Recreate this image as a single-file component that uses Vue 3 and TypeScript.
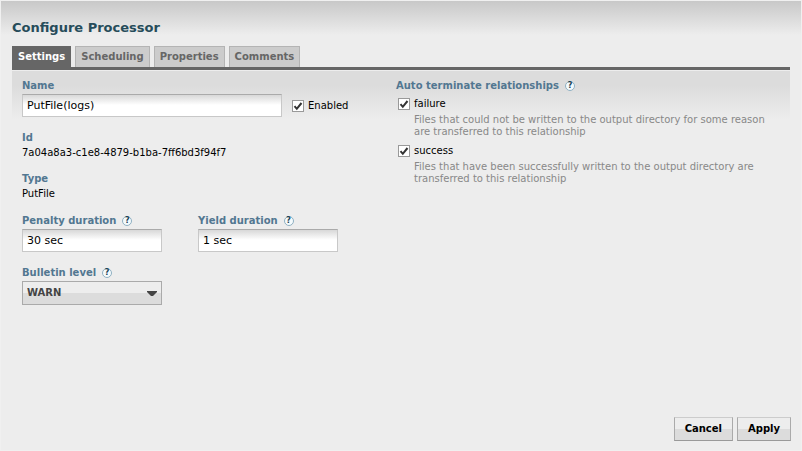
<script setup lang="ts">
import { reactive, ref } from 'vue'

interface Relationship {
  name: string
  description: string
  terminate: boolean
}

const tabs: string[] = ['Settings', 'Scheduling', 'Properties', 'Comments']
const activeTab = ref<string>('Settings')

const processor = reactive({
  name: 'PutFile(logs)',
  enabled: true,
  id: '7a04a8a3-c1e8-4879-b1ba-7ff6bd3f94f7',
  type: 'PutFile',
  penalty: '30 sec',
  yield: '1 sec',
  bulletin: 'WARN',
})

const levels: string[] = ['DEBUG', 'INFO', 'WARN', 'ERROR']

const relationships = reactive<Relationship[]>([
  {
    name: 'failure',
    description:
      'Files that could not be written to the output directory for some reason are transferred to this relationship',
    terminate: true,
  },
  {
    name: 'success',
    description:
      'Files that have been successfully written to the output directory are transferred to this relationship',
    terminate: true,
  },
])
</script>

<template>
  <main class="dialog">
    <h1 class="title">Configure Processor</h1>
    <nav class="tabs">
      <button
        v-for="tab in tabs"
        :key="tab"
        type="button"
        class="tab"
        :class="{ active: tab === activeTab }"
        @click="activeTab = tab"
      >{{ tab }}</button>
    </nav>
    <form class="panel" @submit.prevent>
      <div class="column">
        <div class="name-row">
          <div class="field name-field">
            <label class="label" for="name">Name</label>
            <input id="name" v-model="processor.name" class="text" type="text" />
          </div>
          <label class="check enabled">
            <input v-model="processor.enabled" type="checkbox" class="box" />
            <span>Enabled</span>
          </label>
        </div>
        <div class="field">
          <span class="label">Id</span>
          <span class="value">{{ processor.id }}</span>
        </div>
        <div class="field">
          <span class="label">Type</span>
          <span class="value">{{ processor.type }}</span>
        </div>
        <div class="pair">
          <div class="field short">
            <div class="heading">
              <label class="label" for="penalty">Penalty duration</label>
              <span class="help">?</span>
            </div>
            <input id="penalty" v-model="processor.penalty" class="text" type="text" />
          </div>
          <div class="field short">
            <div class="heading">
              <label class="label" for="yield">Yield duration</label>
              <span class="help">?</span>
            </div>
            <input id="yield" v-model="processor.yield" class="text" type="text" />
          </div>
        </div>
        <div class="field short">
          <div class="heading">
            <label class="label" for="bulletin">Bulletin level</label>
            <span class="help">?</span>
          </div>
          <div class="select-wrap">
            <select id="bulletin" v-model="processor.bulletin" class="select">
              <option v-for="level in levels" :key="level">{{ level }}</option>
            </select>
            <svg class="arrow" width="10" height="5" viewBox="0 0 10 5" aria-hidden="true">
              <path d="M0 0h10v1L6 5H4L0 1z" fill="#444" />
            </svg>
          </div>
        </div>
      </div>
      <div class="column">
        <div class="heading">
          <span class="label">Auto terminate relationships</span>
          <span class="help">?</span>
        </div>
        <div class="relationships">
          <div v-for="item in relationships" :key="item.name" class="relationship">
            <label class="check">
              <input v-model="item.terminate" type="checkbox" class="box" />
              <span>{{ item.name }}</span>
            </label>
            <p class="description">{{ item.description }}</p>
          </div>
        </div>
      </div>
    </form>
    <footer class="actions">
      <button type="button" class="button">Cancel</button>
      <button type="button" class="button">Apply</button>
    </footer>
  </main>
</template>

<style>
body {
  background: #ededed;
}
</style>

<style scoped>
.dialog,
.dialog * {
  box-sizing: border-box;
}
.dialog {
  display: flex;
  flex-direction: column;
  min-height: 100vh;
  padding: 19px 11px 9px;
  border: 1px solid #f0f0f0;
  background: linear-gradient(#c8c8c8, #ededed 34px) no-repeat #ededed;
  color: #000;
  font: 10px/14px Verdana, 'DejaVu Sans', sans-serif;
}
.title {
  margin: 0 0 10px;
  color: #264c5a;
  font-size: 13px;
  line-height: 16px;
}
.tabs {
  display: flex;
  gap: 4px;
  border-bottom: 3px solid #666;
}
.tab {
  height: 21px;
  padding: 0 5px;
  border: 1px solid #b4b4b4;
  border-bottom: 0;
  background: #ccc;
  color: #666;
  font: bold 10px/20px Verdana, 'DejaVu Sans', sans-serif;
}
.tab.active {
  border-color: #666;
  background: #666;
  color: #fff;
}
.panel {
  display: grid;
  grid-template-columns: 374px minmax(0, 1fr);
  flex: 1;
  margin-top: 1px;
  padding: 8px 10px 0;
  background: linear-gradient(#dcdcdc, #dcdcdc 14px, #ededed 48px);
}
.column {
  display: flex;
  flex-direction: column;
}
.field + .field {
  margin-top: 13px;
}
.name-row + .field,
.pair,
.pair + .field {
  margin-top: 14px;
}
.pair .field + .field {
  margin-top: 0;
}
.name-row {
  display: flex;
  align-items: flex-end;
  gap: 10px;
}
.name-field {
  width: 260px;
}
.pair {
  display: flex;
  gap: 36px;
}
.field {
  display: flex;
  flex-direction: column;
}
.short {
  width: 140px;
}
.heading {
  display: flex;
  align-items: center;
  gap: 6px;
}
.label {
  color: #527791;
  font-weight: bold;
}
.value {
  margin-top: 2px;
  line-height: 12px;
}
.help {
  width: 10px;
  height: 10px;
  border: 1px solid #8fb0c2;
  border-radius: 5px;
  background: #f4fafc;
  color: #1c4354;
  font-size: 8px;
  font-weight: bold;
  line-height: 8px;
  text-align: center;
}
.text {
  width: 100%;
  height: 23px;
  margin-top: 1px;
  padding: 0 4px;
  border: 1px solid #c8c8c8;
  border-top-color: #aaa;
  border-radius: 0;
  background: linear-gradient(#d8d8d8, #fff 10px);
  color: #000;
  font: 11px/20px Verdana, 'DejaVu Sans', sans-serif;
}
.check {
  display: flex;
  align-items: center;
  gap: 4px;
}
.enabled {
  height: 23px;
}
.box {
  appearance: none;
  flex: none;
  width: 12px;
  height: 12px;
  margin: 0;
  border: 1px solid #999;
  background: #fff;
}
.box:checked {
  background: #fff
    url("data:image/svg+xml,%3Csvg xmlns='http://www.w3.org/2000/svg' viewBox='0 0 10 10'%3E%3Cpath d='M1.5 5.2l2.3 2.6L8.5 2' fill='none' stroke='%23333' stroke-width='2'/%3E%3C/svg%3E")
    center / 10px 10px no-repeat;
}
.select-wrap {
  position: relative;
  display: flex;
  margin-top: 1px;
}
.select {
  appearance: none;
  width: 100%;
  height: 24px;
  padding: 0 4px;
  border: 1px solid #aaa;
  border-radius: 0;
  background: linear-gradient(#ededed 50%, #dcdcdc 50%);
  color: #444;
  font: bold 10px/20px Verdana, 'DejaVu Sans', sans-serif;
}
.arrow {
  position: absolute;
  top: 10px;
  right: 5px;
  pointer-events: none;
}
.relationships {
  display: flex;
  flex-direction: column;
  gap: 6px;
  margin-top: 4px;
  padding-left: 2px;
}
.description {
  max-width: 372px;
  margin: 3px 0 0;
  padding-left: 16px;
  color: #888;
  line-height: 12px;
}
.actions {
  display: flex;
  justify-content: flex-end;
  gap: 4px;
  margin-right: -1px;
}
.button {
  height: 24px;
  padding: 0 10px;
  border: 1px solid #aaa;
  border-top-color: #ccc;
  border-bottom-color: #999;
  background: linear-gradient(#ededed 50%, #dcdcdc 50%);
  color: #000;
  font: bold 10px/22px Verdana, 'DejaVu Sans', sans-serif;
}
</style>
